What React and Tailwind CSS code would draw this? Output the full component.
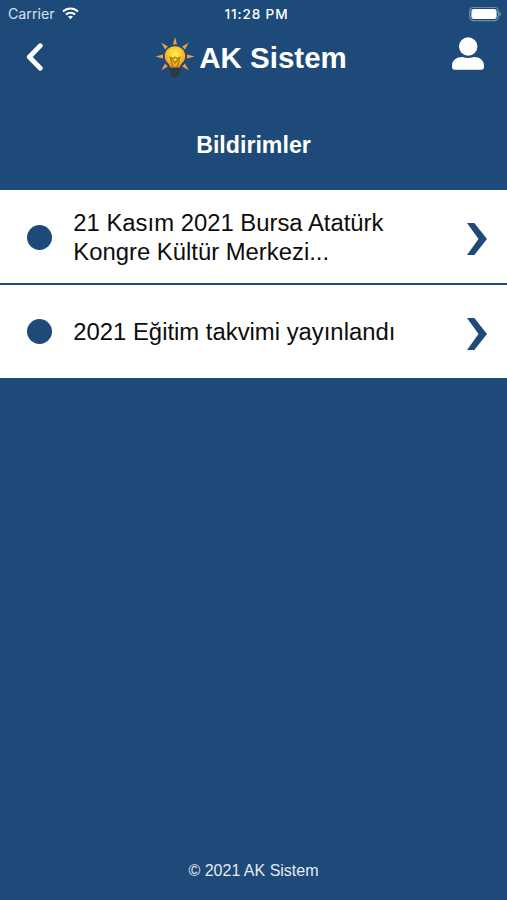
const notifications = [
  { id: 1, title: "21 Kasım 2021 Bursa Atatürk Kongre Kültür Merkezi..." },
  { id: 2, title: "2021 Eğitim takvimi yayınlandı" },
];

const rays = [-135, -90, -45, 0, 45, 90, 135];

function BulbLogo() {
  return (
    <svg className="h-[42px] w-[40px]" viewBox="0 0 40 42">
      <defs>
        <radialGradient id="bulb" cx="0.5" cy="0.38" r="0.6">
          <stop offset="0" stopColor="#fff04a" />
          <stop offset="0.55" stopColor="#fccb28" />
          <stop offset="1" stopColor="#ef8d20" />
        </radialGradient>
      </defs>
      {rays.map((angle) => (
        <path key={angle} d="M18 7.5 L20 0 L22 7.5Z" fill="#e9a04a" transform={`rotate(${angle} 20 19.5)`} />
      ))}
      <path d="M14.5 29.5h11l-.5 7.5-1.8 1.5-1.2 1.5h-5.5l-1-3z" fill="#293947" />
      <path d="M20 9.2c-5.8 0-10.3 4.2-10.3 10 0 5.8 4.9 6.9 5.6 11.4h9.4c.7-4.5 5.6-5.6 5.6-11.4 0-5.8-4.5-10-10.3-10z" fill="url(#bulb)" />
      <path d="M17.8 30l-2.6-9.7 2.4 1.4 2.4-1.4 2.4 1.4 2.4-1.4-2.6 9.7M17 22.5l3 3.5 3-3.5" fill="none" stroke="#a77416" strokeWidth="1.2" />
    </svg>
  );
}

function StatusBar() {
  return (
    <div className="grid h-7 grid-cols-3 items-center pl-2 pr-[5px] font-[Inter,sans-serif] text-[14px] text-white">
      <div className="flex items-center gap-[7px] text-[#d6e1ec]">
        <span className="text-[14.2px]">Carrier</span>
        <svg className="h-[13px] w-[17px]" viewBox="0 0 17 13" fill="none" stroke="#fff" strokeWidth="2.1">
          <path d="M1 4.6C5.2.5 11.8.5 16 4.6" />
          <path d="M3.9 7.6c2.6-2.4 6.6-2.4 9.2 0" />
          <path d="M6 9.6c1.4-1.3 3.6-1.3 5 0L8.5 12.2z" fill="#fff" stroke="none" />
        </svg>
      </div>
      <span className="pl-[3px] text-center text-[13.6px] font-medium tracking-[0.85px]">11:28 PM</span>
      <svg className="h-[15px] w-[33px] justify-self-end" viewBox="0 0 33 15">
        <rect x="0.8" y="0.3" width="28.4" height="13.4" rx="4" fill="none" stroke="#839bb5" strokeWidth="1.1" />
        <rect x="2.4" y="1.9" width="25.2" height="10.2" rx="2.5" fill="#fff" />
        <path d="M30.5 4.8c2 .8 2 3.6 0 4.4z" fill="#839bb5" />
      </svg>
    </div>
  );
}

function Header() {
  return (
    <header className="flex h-[58px] items-start justify-between pl-[26px] pr-[22px] text-white">
      <button className="mt-[14px]" aria-label="Geri">
        <svg className="h-[30px] w-[18px]" viewBox="0 0 18 30" fill="none" stroke="#fff" strokeWidth="4.8" strokeLinecap="round" strokeLinejoin="round">
          <path d="M14.3 3.7L3.3 15l11 11.2" />
        </svg>
      </button>
      <div className="ml-[7px] mt-[7px] flex items-center gap-1">
        <BulbLogo />
        <h1 className="whitespace-nowrap pt-px text-[29.5px] font-bold leading-[44px]">AK Sistem</h1>
      </div>
      <button className="mt-[9px]" aria-label="Profil">
        <svg className="h-[34px] w-[34px]" viewBox="0 0 34 34" fill="#fff">
          <circle cx="17.2" cy="9.5" r="9.2" />
          <path d="M11.5 20.1c4 1.3 7.4 1.3 11.4 0 5.7 0 10.1 3.2 10.1 8.8v1c0 1.7-1.3 2.9-3 2.9H4c-1.7 0-3-1.2-3-2.9v-1c0-5.6 4.8-8.8 10.5-8.8z" />
        </svg>
      </button>
    </header>
  );
}

function NotificationRow({ title }) {
  return (
    <li className="flex h-[93px] items-center bg-white pl-[27.3px] pr-5">
      <span className="mr-[21px] mt-px h-[25px] w-[25px] shrink-0 rounded-full bg-[#1d4a79]" />
      <p className="mt-[2px] w-[330px] text-[23.85px] leading-[28.5px] text-[#0d0d0d]">{title}</p>
      <svg className="ml-auto mt-[5px] h-[32px] w-[20px] shrink-0" viewBox="0 0 20 32" fill="#1d4a79">
        <path d="M0 0h7.3L20 16 7.3 32H0l11.5-16z" />
      </svg>
    </li>
  );
}

function App() {
  return (
    <div className="flex h-screen flex-col bg-[#1d4a79] font-['Liberation_Sans',Arial,sans-serif]">
      <StatusBar />
      <Header />
      <h2 className="flex h-[104.4px] items-center justify-center pb-[5px] pt-[20px] text-[23.2px] font-bold text-white">Bildirimler</h2>
      <ul className="flex flex-col gap-[1.5px]">
        {notifications.map((item) => (
          <NotificationRow key={item.id} title={item.title} />
        ))}
      </ul>
      <footer className="mt-auto pb-[17px] text-center text-[16px] leading-6 text-[#e3eaf1]">© 2021 AK Sistem</footer>
    </div>
  );
}

export default App;
